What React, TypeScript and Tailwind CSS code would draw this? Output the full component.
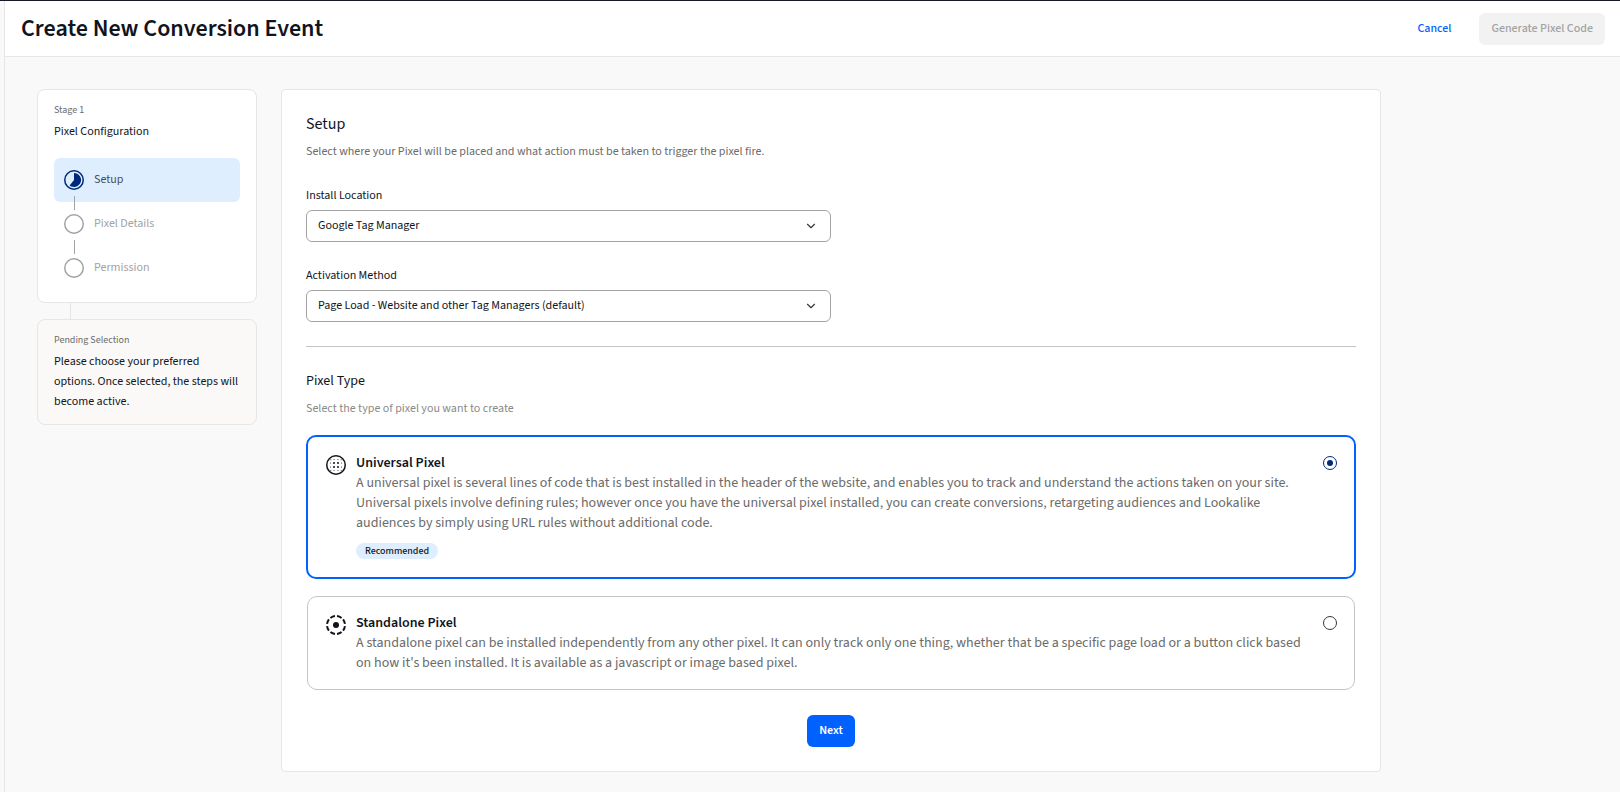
import { useState } from "react";
import type { ReactNode } from "react";
import { ChevronDown } from "lucide-react";

function ProgressIcon() {
  return (
    <svg viewBox="0 0 20 20" className="size-5 shrink-0" fill="none" aria-hidden="true">
      <circle cx="10" cy="10" r="9.25" stroke="#00297a" strokeWidth="1.5" />
      <path d="M10 3a7 7 0 1 1-4.4 12.4L10 10Z" fill="#00297a" />
    </svg>
  );
}

function EmptyStepIcon() {
  return (
    <svg viewBox="0 0 20 20" className="size-5 shrink-0" fill="none" aria-hidden="true">
      <circle cx="10" cy="10" r="9.25" stroke="#a3a3a3" strokeWidth="1.5" />
    </svg>
  );
}

function UniversalIcon() {
  return (
    <svg viewBox="0 0 20 20" className="size-5 shrink-0" fill="#10141c" aria-hidden="true">
      <circle cx="10" cy="10" r="9.25" fill="none" stroke="#10141c" strokeWidth="1.5" />
      {[8, 12].flatMap((x) => [8, 12].map((y) => <circle key={`${x}-${y}`} cx={x} cy={y} r="1" />))}
      {[8, 12].flatMap((a) =>
        [4.5, 15.5].flatMap((b) => [
          <circle key={`h${a}-${b}`} cx={a} cy={b} r=".5" />,
          <circle key={`v${a}-${b}`} cx={b} cy={a} r=".5" />,
        ]),
      )}
      {[4.8, 15.2].flatMap((x) => [4.8, 15.2].map((y) => <circle key={`c${x}-${y}`} cx={x} cy={y} r=".5" />))}
    </svg>
  );
}

function StandaloneIcon() {
  return (
    <svg viewBox="0 0 20 20" className="size-5 shrink-0" fill="none" aria-hidden="true">
      <circle cx="10" cy="10" r="9" stroke="#10141c" strokeWidth="2" pathLength="80" strokeDasharray="7 3" strokeDashoffset="-1.5" />
      <circle cx="10" cy="10" r="3" fill="#10141c" />
    </svg>
  );
}

function SelectField({ id, label, options }: { id: string; label: string; options: string[] }) {
  return (
    <div>
      <label htmlFor={id} className="block text-xs leading-5">
        {label}
      </label>
      <div className="mt-1 grid items-center">
        <select
          id={id}
          className="col-start-1 row-start-1 h-8 w-full appearance-none rounded-md border border-[#a3a3a3] bg-white px-[11px] text-xs"
        >
          {options.map((option) => (
            <option key={option}>{option}</option>
          ))}
        </select>
        <ChevronDown className="pointer-events-none col-start-1 row-start-1 mr-[13px] size-3.5 justify-self-end text-[#333940]" />
      </div>
    </div>
  );
}

interface PixelOptionProps {
  id: string;
  title: string;
  description: string;
  badge?: string;
  icon: ReactNode;
  checked: boolean;
  onSelect: () => void;
}

function PixelOption({ id, title, description, badge, icon, checked, onSelect }: PixelOptionProps) {
  return (
    <label
      htmlFor={id}
      className={
        checked
          ? "flex rounded-[10px] border-2 border-[#0061ff] py-4 pr-[17px] pl-[18px]"
          : "m-px flex rounded-[10px] border border-[#c4c4c4] py-4 pr-[17px] pl-[18px]"
      }
    >
      <span className="pt-0.5">{icon}</span>
      <span className="ml-2.5 flex flex-1 flex-col items-start text-sm leading-5">
        <span className="font-semibold">{title}</span>
        <span className="text-[#6b6b6b]">{description}</span>
        {badge && (
          <span className="mt-2.5 mb-0.5 rounded-full bg-[#deeeff] px-[9px] text-[10px] leading-4 font-medium text-[#10141c]">
            {badge}
          </span>
        )}
      </span>
      <input
        id={id}
        type="radio"
        name="pixel-type"
        checked={checked}
        onChange={onSelect}
        className="mt-[3px] ml-2.5 grid size-3.5 shrink-0 appearance-none place-content-center rounded-full border border-[#333940] before:size-1.5 before:rounded-full checked:border-[#00297a] checked:before:bg-[#00297a]"
      />
    </label>
  );
}

export default function App() {
  const [pixelType, setPixelType] = useState("universal");

  return (
    <div className="flex min-h-screen flex-col border-t border-[#161a29] bg-[#f9f9f9] pl-1 font-['Source_Sans_3','Noto_Sans_CJK_SC',sans-serif] text-[#10141c]">
      <div className="flex-1 border-l border-[#e6e6e6]">
        <header className="flex h-14 items-center justify-between border-b border-[#e6e6e6] bg-white pr-[15px] pl-4">
          <h1 className="text-2xl leading-8 font-semibold">Create New Conversion Event</h1>
          <div className="flex items-center gap-4 text-xs font-medium">
            <button type="button" className="h-8 px-3 text-[#0061ff]">
              Cancel
            </button>
            <button type="button" disabled className="h-8 rounded-md bg-[#f2f2f2] px-3 text-[#a3a3a3]">
              Generate Pixel Code
            </button>
          </div>
        </header>

        <div className="flex items-start gap-6 px-8 pt-8 pb-5">
          <aside className="w-[220px] shrink-0">
            <section className="rounded-lg border border-[#e6e6e6] bg-white px-4 pt-2.5 pb-3">
              <p className="text-[10px] leading-5 text-[#6b6b6b]">Stage 1</p>
              <h2 className="text-xs leading-6">Pixel Configuration</h2>
              <ol className="mt-3.5 text-xs">
                <li className="flex h-11 items-center gap-2.5 rounded-md bg-[#deeeff] px-2.5 text-[#4a4f57]">
                  <ProgressIcon />
                  Setup
                </li>
                <li className="relative flex h-11 items-center gap-2.5 px-2.5 text-[#a3a3a3]">
                  <span className="absolute -top-1.5 left-5 h-3.5 w-px bg-[#a3a3a3]" />
                  <EmptyStepIcon />
                  Pixel Details
                </li>
                <li className="relative flex h-11 items-center gap-2.5 px-2.5 text-[#a3a3a3]">
                  <span className="absolute -top-1.5 left-5 h-3.5 w-px bg-[#a3a3a3]" />
                  <EmptyStepIcon />
                  Permission
                </li>
              </ol>
            </section>
            <div className="ml-[33px] h-4 w-px bg-[#e6e6e6]" />
            <section className="rounded-lg border border-[#e6e6e6] bg-[#faf9f7] px-4 pt-2.5 pb-3">
              <p className="text-[10px] leading-5 text-[#6b6b6b]">Pending Selection</p>
              <p className="mt-0.5 text-xs leading-5">
                Please choose your preferred options. Once selected, the steps will become active.
              </p>
            </section>
          </aside>

          <main className="max-w-[1100px] flex-1 rounded border border-[#e6e6e6] bg-white p-6">
            <h2 className="text-base leading-5">Setup</h2>
            <p className="mt-2 text-xs leading-5 text-[#6b6b6b]">
              Select where your Pixel will be placed and what action must be taken to trigger the pixel fire.
            </p>

            <div className="mt-6 w-1/2 space-y-6">
              <SelectField
                id="install-location"
                label="Install Location"
                options={["Google Tag Manager", "Website"]}
              />
              <SelectField
                id="activation-method"
                label="Activation Method"
                options={["Page Load - Website and other Tag Managers (default)", "Button Click"]}
              />
            </div>

            <hr className="mt-6 border-[#c4c4c4]" />

            <h3 className="mt-6 text-sm leading-5">Pixel Type</h3>
            <p className="mt-2 text-xs leading-5 text-[#8a8a8a]">Select the type of pixel you want to create</p>

            <div className="mt-4 flex flex-col gap-4">
              <PixelOption
                id="pixel-universal"
                title="Universal Pixel"
                description="A universal pixel is several lines of code that is best installed in the header of the website, and enables you to track and understand the actions taken on your site. Universal pixels involve defining rules; however once you have the universal pixel installed, you can create conversions, retargeting audiences and Lookalike audiences by simply using URL rules without additional code."
                badge="Recommended"
                icon={<UniversalIcon />}
                checked={pixelType === "universal"}
                onSelect={() => setPixelType("universal")}
              />
              <PixelOption
                id="pixel-standalone"
                title="Standalone Pixel"
                description="A standalone pixel can be installed independently from any other pixel. It can only track only one thing, whether that be a specific page load or a button click based on how it's been installed. It is available as a javascript or image based pixel."
                icon={<StandaloneIcon />}
                checked={pixelType === "standalone"}
                onSelect={() => setPixelType("standalone")}
              />
            </div>

            <div className="mt-6 flex justify-center">
              <button type="button" className="h-8 rounded-md bg-[#0061ff] px-3 text-xs font-semibold text-white">
                Next
              </button>
            </div>
          </main>
        </div>
      </div>
    </div>
  );
}
